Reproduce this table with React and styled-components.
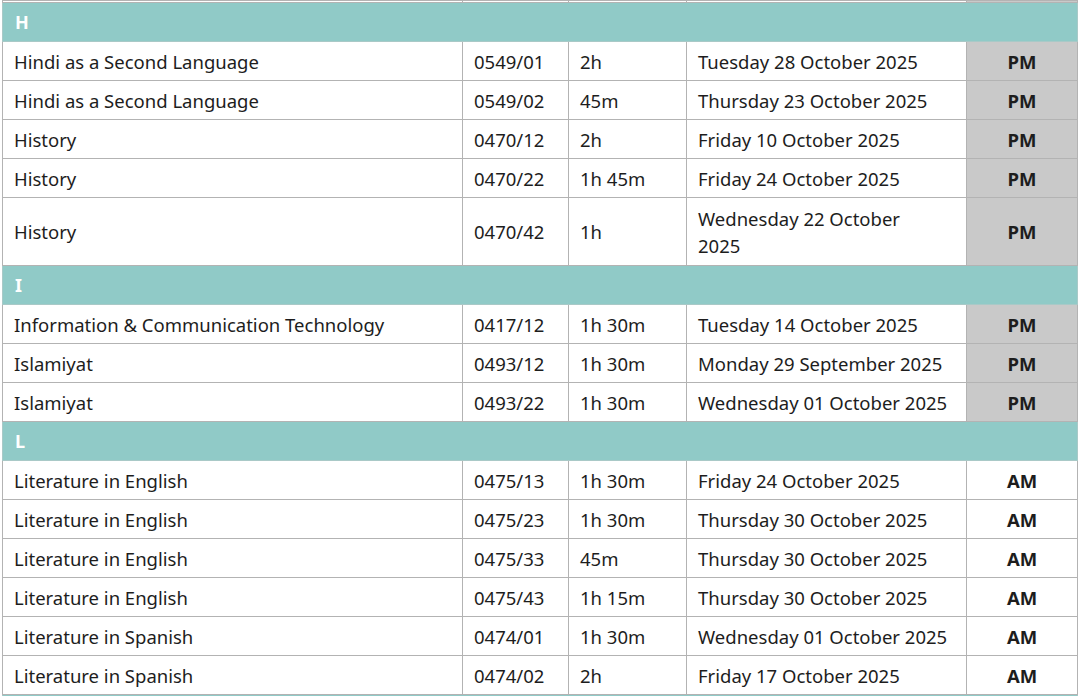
import React from 'react'
import styled, { createGlobalStyle } from 'styled-components'

const Global = createGlobalStyle`
  html, body {
    margin: 0;
    padding: 0;
    background: #fff;
    height: 696px;
    overflow: hidden;
  }
`

const Table = styled.table`
  border-collapse: collapse;
  table-layout: fixed;
  width: 1075px;
  margin-left: 2px;
  font-family: "Noto Sans", "Open Sans", sans-serif;
  font-size: 18.5px;
  color: #1d1d1d;
`

const Row = styled.tr`
  height: ${p => p.tall ? '68px' : '39px'};
`

const HeaderRow = styled.tr`
  height: ${p => p.stub ? '3px' : '39px'};
`

const StubRow = styled.tr`
  height: 1px;
  td {
    padding: 0;
    height: 1px;
  }
`

const Cell = styled.td`
  border: 1px solid #b3b3b3;
  padding: 0 0 0 11px;
  vertical-align: middle;
  line-height: 27px;
`

const TimeCell = styled.td`
  border: 1px solid #b3b3b3;
  padding: 0;
  text-align: center;
  font-weight: 700;
  background: ${p => p.pm ? '#c9c9c9' : '#fff'};
`

const Header = styled.td`
  border: 1px solid #a9c9c7;
  background: #90cac7;
  color: #fff;
  font-weight: 700;
  font-size: 18px;
  padding: 0 0 0 12px;
`

const sections = [
  {
    letter: 'H',
    rows: [
      ['Hindi as a Second Language', '0549/01', '2h', 'Tuesday 28 October 2025', 'PM'],
      ['Hindi as a Second Language', '0549/02', '45m', 'Thursday 23 October 2025', 'PM'],
      ['History', '0470/12', '2h', 'Friday 10 October 2025', 'PM'],
      ['History', '0470/22', '1h 45m', 'Friday 24 October 2025', 'PM'],
      ['History', '0470/42', '1h', ['Wednesday 22 October', '2025'], 'PM', true],
    ],
  },
  {
    letter: 'I',
    rows: [
      ['Information & Communication Technology', '0417/12', '1h 30m', 'Tuesday 14 October 2025', 'PM'],
      ['Islamiyat', '0493/12', '1h 30m', 'Monday 29 September 2025', 'PM'],
      ['Islamiyat', '0493/22', '1h 30m', 'Wednesday 01 October 2025', 'PM'],
    ],
  },
  {
    letter: 'L',
    rows: [
      ['Literature in English', '0475/13', '1h 30m', 'Friday 24 October 2025', 'AM'],
      ['Literature in English', '0475/23', '1h 30m', 'Thursday 30 October 2025', 'AM'],
      ['Literature in English', '0475/33', '45m', 'Thursday 30 October 2025', 'AM'],
      ['Literature in English', '0475/43', '1h 15m', 'Thursday 30 October 2025', 'AM'],
      ['Literature in Spanish', '0474/01', '1h 30m', 'Wednesday 01 October 2025', 'AM'],
      ['Literature in Spanish', '0474/02', '2h', 'Friday 17 October 2025', 'AM'],
    ],
  },
]

const DateText = ({ value }) =>
  Array.isArray(value)
    ? value.map((line, i) => (
        <React.Fragment key={i}>
          {i > 0 && <br />}
          {line}
        </React.Fragment>
      ))
    : value

export default function App() {
  return (
    <>
      <Global />
      <Table>
        <colgroup>
          <col style={{ width: 460 }} />
          <col style={{ width: 106 }} />
          <col style={{ width: 118 }} />
          <col style={{ width: 280 }} />
          <col style={{ width: 111 }} />
        </colgroup>
        <tbody>
          <StubRow>
            <Cell /><Cell /><Cell /><Cell /><TimeCell pm />
          </StubRow>
          {sections.map(s => (
            <React.Fragment key={s.letter}>
              <HeaderRow>
                <Header colSpan={5}>{s.letter}</Header>
              </HeaderRow>
              {s.rows.map((r, i) => (
                <Row key={i} tall={r[5]}>
                  <Cell>{r[0]}</Cell>
                  <Cell>{r[1]}</Cell>
                  <Cell>{r[2]}</Cell>
                  <Cell><DateText value={r[3]} /></Cell>
                  <TimeCell pm={r[4] === 'PM'}>{r[4]}</TimeCell>
                </Row>
              ))}
            </React.Fragment>
          ))}
          <HeaderRow stub>
            <Header colSpan={5} />
          </HeaderRow>
        </tbody>
      </Table>
    </>
  )
}
